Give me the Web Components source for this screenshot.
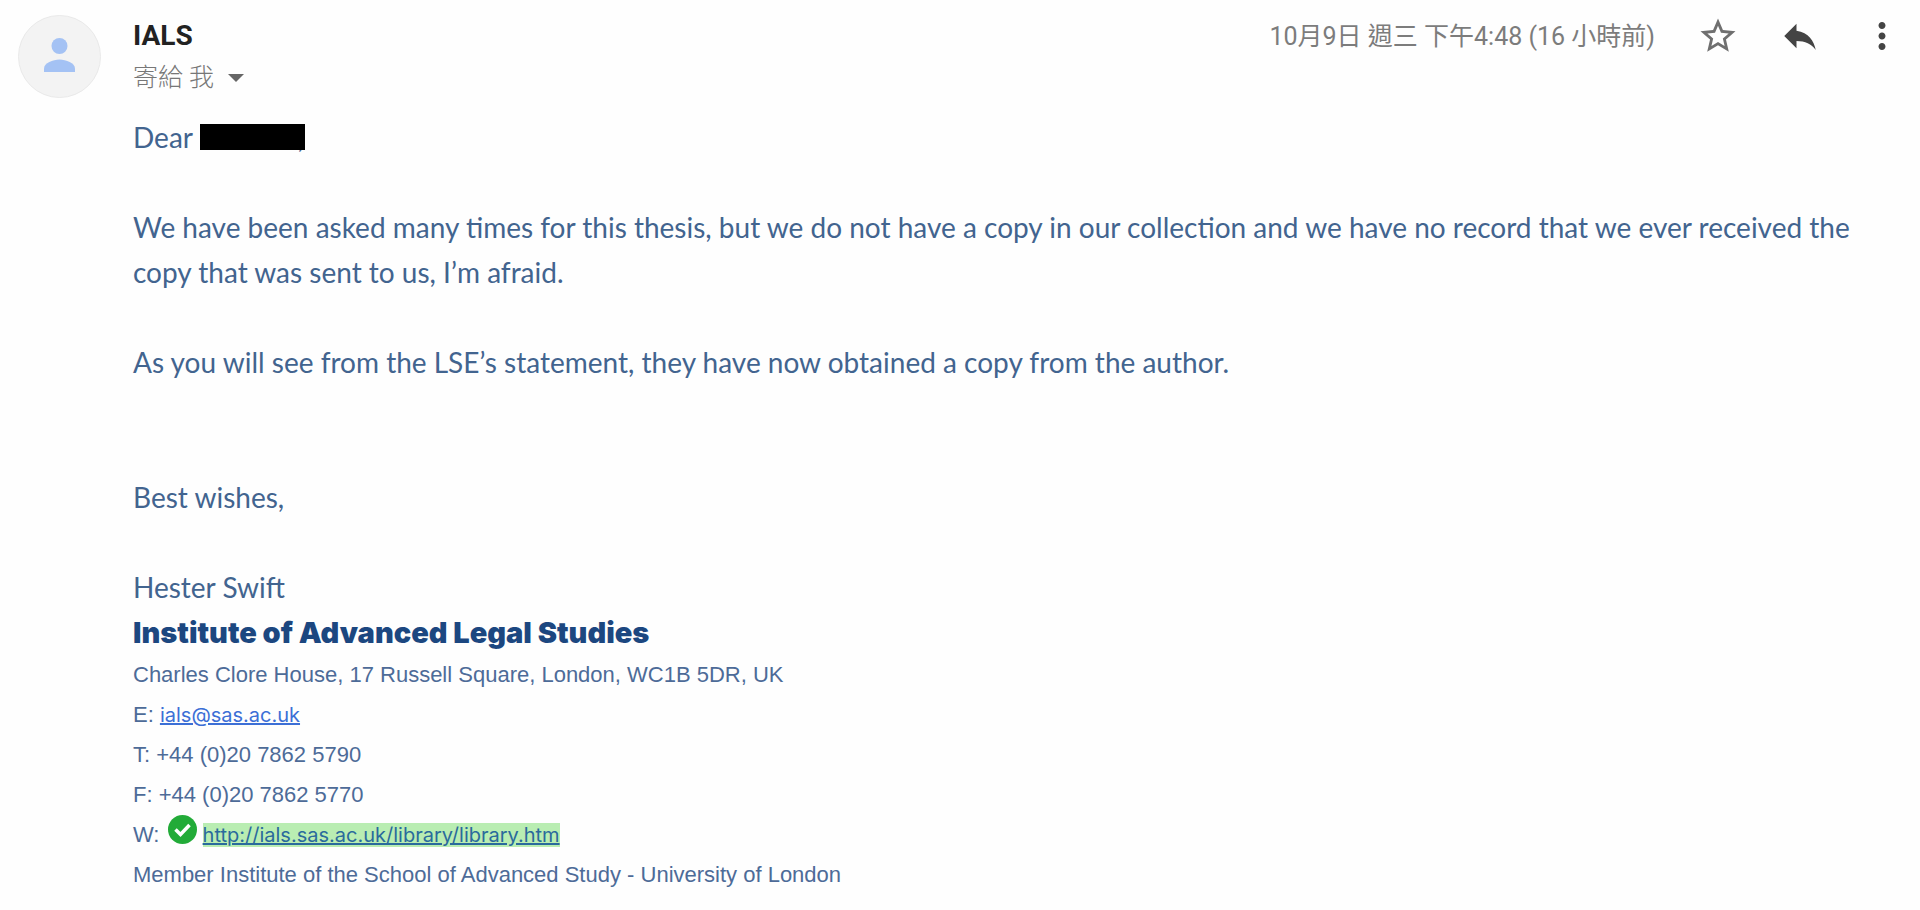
<!DOCTYPE html>
<html lang="zh-Hant">
<head>
<meta charset="utf-8">
<meta name="viewport" content="width=device-width, initial-scale=1">
<title>IALS</title>
<style>
body {
  margin: 0;
  background-color: #fefefe;
  font-family: Roboto, "Noto Sans CJK TC", sans-serif;
}
</style>
</head>
<body>
<mail-message>
  <mail-header slot="header" sender="IALS" recipient="寄給 我" date="10月9日 週三 下午4:48 (16 小時前)"></mail-header>
  <mail-body>
    <p>Dear <redacted-name></redacted-name>,</p>
    <p>We have been asked many times for this thesis, but we do not have a copy in our collection and we have no record that we ever received the copy that was sent to us, I’m afraid.</p>
    <p>As you will see from the LSE’s statement, they have now obtained a copy from the author.</p>
    <p class="closing">Best wishes,</p>
    <p>Hester Swift</p>
  </mail-body>
  <mail-signature></mail-signature>
</mail-message>

<script>
const messageTemplate = document.createElement('template')
messageTemplate.innerHTML = `
<style>
:host {
  display: block;
}

.content {
  padding: 0 60px 16px 133px;
}
</style>
<article>
  <slot name="header"></slot>
  <div class="content"><slot></slot></div>
</article>
`
customElements.define('mail-message',
  /**
   * Wraps one opened message.
   */
  class extends HTMLElement {
    constructor () {
      super()

      this.attachShadow({ mode: 'open' })
        .appendChild(messageTemplate.content.cloneNode(true))
    }
  })

const avatarTemplate = document.createElement('template')
avatarTemplate.innerHTML = `
<style>
:host {
  display: block;
  width: 83px;
  height: 83px;
}

svg {
  display: block;
  width: 100%;
  height: 100%;
}
</style>
<svg viewBox="0 0 83 83" aria-hidden="true">
  <circle cx="41.500" cy="41.500" r="41" fill="#f3f3f3" stroke="#e9e9e9"/>
  <circle cx="41.500" cy="31" r="8" fill="#a4c2f4"/>
  <path d="M26 57v-3.500c0-5.500 9-9 15.500-9s15.500 3.500 15.500 9V57z" fill="#a4c2f4"/>
</svg>
`
customElements.define('user-avatar',
  /**
   * Placeholder picture of a sender.
   */
  class extends HTMLElement {
    constructor () {
      super()

      this.attachShadow({ mode: 'open' })
        .appendChild(avatarTemplate.content.cloneNode(true))
    }
  })

const icons = {
  star: '<path fill="#6f6f6f" d="M22 9.240l-7.190-.62L12 2 9.190 8.630 2 9.240l5.460 4.730L5.820 21 12 17.270 18.180 21l-1.630-7.030L22 9.240zM12 15.400l-3.760 2.270 1-4.280-3.320-2.880 4.380-.38L12 6.100l1.710 4.040 4.380.38-3.320 2.880 1 4.280L12 15.400z"/>',
  reply: '<path fill="#444" d="M10 9V5l-7 7 7 7v-4.100c5 0 8.500 1.600 11 5.100-1-5-4-10-11-11z"/>',
  more: '<path fill="#444" d="M12 8c1.100 0 2-.9 2-2s-.9-2-2-2-2 .9-2 2 .9 2 2 2zm0 2c-1.100 0-2 .9-2 2s.9 2 2 2 2-.9 2-2-.9-2-2-2zm0 6c-1.100 0-2 .9-2 2s.9 2 2 2 2-.9 2-2-.9-2-2-2z"/>'
}

const iconButtonTemplate = document.createElement('template')
iconButtonTemplate.innerHTML = `
<style>
:host {
  display: block;
}

button {
  display: block;
  width: 42px;
  height: 42px;
  padding: 0;
  border: 0;
  background: none;
  cursor: pointer;
}

svg {
  display: block;
  width: 100%;
  height: 100%;
}
</style>
<button type="button"><svg viewBox="0 0 24 24" aria-hidden="true"></svg></button>
`
customElements.define('icon-button',
  /**
   * Button with a single icon, picked by the icon attribute.
   */
  class extends HTMLElement {
    constructor () {
      super()

      this.attachShadow({ mode: 'open' })
        .appendChild(iconButtonTemplate.content.cloneNode(true))
    }

    connectedCallback () {
      this.shadowRoot.querySelector('svg').innerHTML = icons[this.getAttribute('icon')]
      this.shadowRoot.querySelector('button').setAttribute('aria-label', this.getAttribute('label'))
    }
  })

const headerTemplate = document.createElement('template')
headerTemplate.innerHTML = `
<style>
:host {
  display: block;
}

header {
  display: flex;
  align-items: flex-start;
  padding: 15px 17px 0 18px;
}

.people {
  flex: 1;
  margin-left: 32px;
}

.sender {
  margin: 0;
  color: #222;
  font-size: 28px;
  font-weight: 700;
  line-height: 42px;
}

.recipient {
  display: flex;
  align-items: center;
  gap: 14px;
  padding: 0;
  border: 0;
  background: none;
  color: #777;
  font-family: inherit;
  font-size: 25px;
  font-weight: 300;
  line-height: 42px;
  cursor: pointer;
}

.recipient svg {
  width: 16px;
  height: 8px;
}

.date {
  color: #7c7c7c;
  font-size: 25px;
  line-height: 44px;
}

.actions {
  display: flex;
  gap: 40px;
  margin-left: 42px;
}
</style>
<header>
  <user-avatar></user-avatar>
  <div class="people">
    <h3 class="sender"></h3>
    <button class="recipient" type="button"><span></span><svg viewBox="0 0 16 8" aria-hidden="true"><path d="M0 0h16L8 8z" fill="#666"/></svg></button>
  </div>
  <time class="date"></time>
  <div class="actions">
    <icon-button icon="star" label="加星號"></icon-button>
    <icon-button icon="reply" label="回覆"></icon-button>
    <icon-button icon="more" label="更多"></icon-button>
  </div>
</header>
`
customElements.define('mail-header',
  /**
   * Sender, date and actions of a message.
   */
  class extends HTMLElement {
    constructor () {
      super()

      this.attachShadow({ mode: 'open' })
        .appendChild(headerTemplate.content.cloneNode(true))
      this.sender = this.shadowRoot.querySelector('.sender')
      this.recipient = this.shadowRoot.querySelector('.recipient span')
      this.date = this.shadowRoot.querySelector('.date')
    }

    connectedCallback () {
      this.sender.textContent = this.getAttribute('sender')
      this.recipient.textContent = this.getAttribute('recipient')
      this.date.textContent = this.getAttribute('date')
    }
  })

const bodyTemplate = document.createElement('template')
bodyTemplate.innerHTML = `
<style>
:host {
  display: block;
  padding-top: 16px;
  color: #42648f;
  font-family: Lato, sans-serif;
  font-size: 28px;
  line-height: 45px;
}

::slotted(p) {
  margin: 0 0 45px;
}

::slotted(p.closing) {
  margin-top: 90px;
}

::slotted(p:last-child) {
  margin-bottom: 0;
}
</style>
<slot></slot>
`
customElements.define('mail-body',
  /**
   * Text of the message.
   */
  class extends HTMLElement {
    constructor () {
      super()

      this.attachShadow({ mode: 'open' })
        .appendChild(bodyTemplate.content.cloneNode(true))
    }
  })

const redactedTemplate = document.createElement('template')
redactedTemplate.innerHTML = `
<style>
:host {
  display: inline-block;
  position: relative;
  width: 105px;
  height: 26px;
  margin-right: -7px;
  vertical-align: -2px;
  background-color: #000;
}
</style>
`
customElements.define('redacted-name',
  /**
   * Black bar over a name.
   */
  class extends HTMLElement {
    constructor () {
      super()

      this.attachShadow({ mode: 'open' })
        .appendChild(redactedTemplate.content.cloneNode(true))
    }
  })

const signatureTemplate = document.createElement('template')
signatureTemplate.innerHTML = `
<style>
:host {
  display: block;
  color: #4d6b98;
  font-family: "Liberation Sans", Arial, sans-serif;
  font-size: 22px;
  line-height: 40px;
}

h4 {
  margin: 0;
  color: #1c4780;
  font-family: Inter, sans-serif;
  font-size: 29px;
  font-weight: 900;
  line-height: 45px;
}

address {
  font-style: normal;
}

p {
  margin: 0;
}

a {
  color: #3c6fd6;
  font-family: Inter, sans-serif;
  font-size: 20px;
}

.safe {
  background-color: #b9edb2;
  color: #2a6a9c;
}

svg {
  width: 29px;
  height: 29px;
  margin: 0 6px 0 2px;
  vertical-align: -2px;
}
</style>
<h4>Institute of Advanced Legal Studies</h4>
<address>
  <p>Charles Clore House, 17 Russell Square, London, WC1B 5DR, UK</p>
  <p>E: <a href="mailto:ials@sas.ac.uk">ials@sas.ac.uk</a></p>
  <p>T: +44 (0)20 7862 5790</p>
  <p>F: +44 (0)20 7862 5770</p>
  <p>W: <svg viewBox="0 0 29 29" aria-hidden="true"><circle cx="14.500" cy="14.500" r="14.500" fill="#22ab38"/><path d="M7.500 14.500l5 5 9-9.500" fill="none" stroke="#fff" stroke-width="3.500"/></svg><a class="safe" href="http://ials.sas.ac.uk/library/library.htm">http://ials.sas.ac.uk/library/library.htm</a></p>
  <p>Member Institute of the School of Advanced Study - University of London</p>
</address>
`
customElements.define('mail-signature',
  /**
   * Contact details under the message.
   */
  class extends HTMLElement {
    constructor () {
      super()

      this.attachShadow({ mode: 'open' })
        .appendChild(signatureTemplate.content.cloneNode(true))
    }
  })
</script>
</body>
</html>
